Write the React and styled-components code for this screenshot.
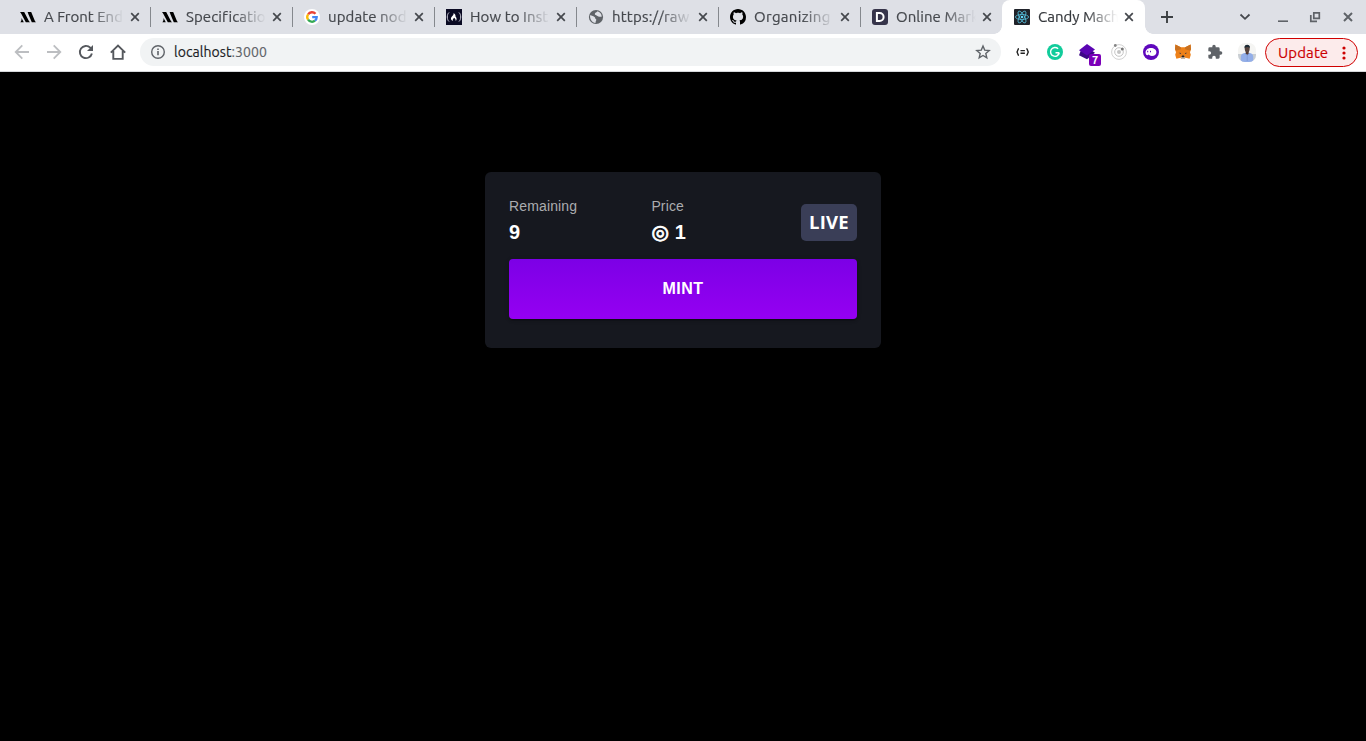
import React from "react";
import styled, { createGlobalStyle, css } from "styled-components";

const GlobalStyle = createGlobalStyle`
  * { box-sizing: border-box; }
  html, body { margin: 0; height: 100%; background: #000; overflow: hidden; }
  body { font-family: "Liberation Sans", Arial, sans-serif; }
  svg { display: block; flex: none; overflow: visible; }
`;

const ui = css`
  font-family: Ubuntu, "Noto Sans", sans-serif;
`;

const Window = styled.div`
  width: 1366px;
  height: 741px;
  display: flex;
  flex-direction: column;
  background: #000;
`;

const TabStrip = styled.div`
  height: 34px;
  flex: none;
  display: flex;
  padding-left: 8px;
  background: #dee0e6;
`;

const Tab = styled.div`
  ${ui}
  position: relative;
  width: ${(p) => (p.$active ? 143 : 142)}px;
  height: 34px;
  display: flex;
  align-items: center;
  padding-left: 12px;
  color: ${(p) => (p.$active ? "#35383c" : "#45484d")};
  background: ${(p) => (p.$active ? "#fff" : "transparent")};
  border-radius: 8px 8px 0 0;
  ${(p) =>
    p.$active &&
    css`
      &::before,
      &::after {
        content: "";
        position: absolute;
        bottom: 0;
        width: 8px;
        height: 8px;
      }
      &::before {
        left: -8px;
        background: radial-gradient(circle at 0 0, transparent 7.5px, #fff 8px);
      }
      &::after {
        right: -8px;
        background: radial-gradient(circle at 100% 0, transparent 7.5px, #fff 8px);
      }
    `}
`;

const Divider = styled.span`
  position: absolute;
  right: -1px;
  top: 7px;
  width: 1px;
  height: 20px;
  background: #85888d;
`;

const TabTitle = styled.span`
  width: 80px;
  margin: 0 6px 0 8px;
  white-space: nowrap;
  font-size: 15px;
  line-height: 20px;
  letter-spacing: ${(p) => p.$spacing || 0}px;
  -webkit-text-stroke: 0.2px currentColor;
  mask-image: linear-gradient(90deg, #000 60%, transparent 100%);
`;

const NewTab = styled.div`
  width: 44px;
  display: flex;
  align-items: center;
  justify-content: center;
`;

const WindowControls = styled.div`
  margin-left: auto;
  display: flex;
  align-items: center;
  padding-right: 1px;
`;

const Control = styled.span`
  width: ${(p) => p.$width}px;
  display: flex;
  justify-content: center;
`;

const Toolbar = styled.div`
  height: 38px;
  flex: none;
  display: flex;
  padding: 4px 8px 0 6px;
  background: #fff;
  border-bottom: 1px solid #d5d7da;
`;

const NavButton = styled.span`
  width: 32px;
  height: 28px;
  display: flex;
  align-items: center;
  justify-content: center;
`;

const AddressBar = styled.div`
  ${ui}
  width: 861px;
  height: 28px;
  margin-left: 6px;
  padding: 0 10px;
  display: flex;
  align-items: center;
  border-radius: 14px;
  background: #f1f3f4;
  font-size: 14px;
  color: #202124;
`;

const Url = styled.span`
  margin-left: 8px;
  flex: 1;
  line-height: 20px;
  letter-spacing: 0.07px;
  -webkit-text-stroke: 0.15px currentColor;
  span { color: #5f6368; }
`;

const Extensions = styled.div`
  display: flex;
  margin-left: 6px;
  width: 258px;
`;

const Extension = styled.span`
  position: relative;
  width: 32px;
  height: 28px;
  display: flex;
  align-items: center;
  justify-content: center;
`;

const Badge = styled.span`
  ${ui}
  position: absolute;
  left: 18px;
  top: 16px;
  width: 12px;
  height: 12px;
  border-radius: 2px;
  background: #7b00b8;
  color: #fff;
  font-size: 11px;
  font-weight: 700;
  line-height: 12px;
  text-align: center;
`;

const UpdateButton = styled.div`
  ${ui}
  width: 93px;
  height: 29px;
  display: flex;
  align-items: center;
  justify-content: space-between;
  padding: 0 11px 0 12px;
  border: 1px solid #d00000;
  border-radius: 15px;
  background: #fcebeb;
  color: #cc0000;
  font-size: 15px;
  line-height: 20px;
  letter-spacing: 0.1px;
  -webkit-text-stroke: 0.15px currentColor;
`;

const Page = styled.main`
  flex: 1;
  display: flex;
  justify-content: center;
  align-items: flex-start;
  padding-top: 100px;
  background: #000;
`;

const Card = styled.section`
  width: 396px;
  height: 176px;
  padding: 24px;
  border-radius: 6px;
  background: #16181f;
`;

const Stats = styled.div`
  display: flex;
  height: 52px;
  margin-bottom: 11px;
`;

const Stat = styled.div`
  width: ${(p) => p.$width}px;
`;

const Label = styled.div`
  font-size: 14px;
  line-height: 20px;
  letter-spacing: 0.14px;
  color: #abacaf;
`;

const Value = styled.div`
  font-size: 20px;
  font-weight: 700;
  line-height: 32px;
  letter-spacing: 0.15px;
  color: #fff;
  font-family: "Liberation Sans", "DejaVu Sans", sans-serif;
`;

const Currency = styled.span`
  -webkit-text-stroke: 0.9px #fff;
`;

const Live = styled.div`
  width: 56px;
  height: 37px;
  margin: 8px 0 0 auto;
  border-radius: 5px;
  background: #3a3e57;
  color: #fff;
  font-family: "Open Sans", "Noto Sans", sans-serif;
  font-size: 18.5px;
  font-weight: 700;
  line-height: 35px;
  letter-spacing: 0.2px;
  text-align: center;
`;

const MintButton = styled.button`
  display: block;
  width: 348px;
  height: 60px;
  padding: 0;
  border: 0;
  border-radius: 4px;
  background: linear-gradient(180deg, #7c00e6 0%, #9500f2 100%);
  box-shadow: 0 3px 1px -2px rgba(0, 0, 0, 0.2), 0 2px 2px rgba(0, 0, 0, 0.14),
    0 1px 5px rgba(0, 0, 0, 0.12);
  color: #fff;
  font: 700 16px/28px "Liberation Sans", Arial, sans-serif;
  letter-spacing: 0.457px;
`;

const Svg = ({ size = 16, box, children, ...rest }) => (
  <svg width={size} height={size} viewBox={`0 0 ${box || size} ${box || size}`} fill="none" {...rest}>
    {children}
  </svg>
);

const CloseIcon = () => (
  <Svg size={10} stroke="#45484d" strokeWidth="1.7">
    <path d="M1.2 1.2 8.8 8.8M8.8 1.2 1.2 8.8" />
  </Svg>
);

const ModernIcon = () => (
  <Svg fill="#000">
    <path d="M0 3h4.2l4.3 8.2c.5 1 1 1.6 1.6 2H5.800L1.400 5C1 4.200.600 3.500 0 3Z" />
    <path d="M7.500 3h3.700l3.500 8.400c.3.800.8 1.300 1.300 1.800h-4.200L8.300 5c-.2-.9-.4-1.500-.8-2Z" />
    <path d="M.3 13.200c1-.8 1.400-2 1.200-4.200l2.300 4.200Z" />
  </Svg>
);

const GoogleIcon = () => (
  <Svg>
    <circle cx="8" cy="8" r="8" fill="#fff" />
    <g strokeWidth="2.300">
      <path d="M4.100 5.300A4.700 4.700 0 0 1 11.500 4.800" stroke="#ea4335" />
      <path d="M4.100 5.300a4.700 4.700 0 0 0 0 5.400" stroke="#fbbc05" />
      <path d="M4.100 10.700a4.700 4.700 0 0 0 6.900 1" stroke="#34a853" />
      <path d="M11 11.700A4.700 4.700 0 0 0 12.700 8.200H8.200" stroke="#4285f4" />
    </g>
  </Svg>
);

const CampIcon = () => (
  <Svg>
    <rect width="16" height="16" fill="#0a0a23" />
    <path d="M3 3.500C.700 5.500.700 10.500 3 12.500M13 3.500c2.300 2 2.300 7 0 9" stroke="#d0d0dc" strokeWidth="1" />
    <path d="M7.500 4c1.500.8 2.200 2 2 3.400 1.200 1.100 1.700 3.300.2 4.700.2-1.500-.5-2.400-1.500-3.300-1.100.8-1.800 1.900-1.300 3.200-2.300-1-2.600-3.200-.5-5 .9-1 1.500-1.800 1.100-3Z" fill="#fff" />
  </Svg>
);

const GlobeIcon = () => (
  <Svg>
    <circle cx="8" cy="8" r="7.100" fill="#5f6368" />
    <path d="M2 6.200c2 .2 3.700.8 4.800 2 .7.800.2 1.700 1.400 2.100.3 1.300-.7 2-.7 3.600C4 13.600 1.900 10.500 2 6.200ZM9.600 2.300C8.800 3.800 7 3.500 6.800 5c-.1 1.300 1.700 1 2.600 2 1 1.200 2.500.6 4.300.7.100-2.200-1.300-4.500-4.100-5.400Z" fill="#dee0e6" />
  </Svg>
);

const GithubIcon = () => (
  <Svg>
    <path fill="#000" d="M8 0C3.580 0 0 3.580 0 8c0 3.540 2.290 6.530 5.470 7.590.4.070.55-.17.55-.38 0-.19-.01-.82-.01-1.490-2.010.37-2.530-.49-2.690-.94-.09-.23-.48-.94-.82-1.130-.28-.15-.68-.52-.01-.53.63-.01 1.080.58 1.230.82.72 1.210 1.870.87 2.330.66.070-.52.28-.87.51-1.070-1.780-.2-3.640-.89-3.640-3.950 0-.87.31-1.590.82-2.150-.08-.2-.36-1.020.08-2.120 0 0 .67-.21 2.200.82.64-.18 1.320-.27 2-.27s1.360.09 2 .27c1.530-1.040 2.200-.82 2.200-.82.44 1.100.16 1.920.08 2.120.51.56.82 1.270.82 2.150 0 3.070-1.870 3.750-3.650 3.950.29.25.54.73.54 1.480 0 1.070-.01 1.930-.01 2.200 0 .21.15.46.55.38A8.010 8.010 0 0 0 16 8c0-4.420-3.580-8-8-8Z" />
  </Svg>
);

const DribbleIcon = () => (
  <Svg>
    <rect width="16" height="16" rx="3" fill="#36344a" />
    <path d="M4.900 4h2.700a4 4 0 0 1 0 8H4.900Z" stroke="#fff" strokeWidth="2" />
  </Svg>
);

const ReactIcon = () => (
  <Svg>
    <rect width="16" height="16" rx="1" fill="#20232a" />
    <g stroke="#55bfdc" strokeWidth=".8">
      <ellipse cx="8" cy="8" rx="6.600" ry="2.500" />
      <ellipse cx="8" cy="8" rx="6.600" ry="2.500" transform="rotate(60 8 8)" />
      <ellipse cx="8" cy="8" rx="6.600" ry="2.500" transform="rotate(120 8 8)" />
    </g>
    <circle cx="8" cy="8" r="1.300" fill="#61dafb" />
  </Svg>
);

const BackIcon = ({ flip }) => (
  <Svg stroke="#bcbec1" strokeWidth="1.800" transform={flip ? "scale(-1 1)" : undefined}>
    <path d="M15 8H2M8.300 1.400 1.700 8l6.600 6.600" />
  </Svg>
);

const ReloadIcon = () => (
  <Svg>
    <path d="M13.900 9.500A6.100 6.100 0 1 1 12.300 3.700l1.200 1.200" stroke="#55585d" strokeWidth="1.900" />
    <path d="M15 1v6H9Z" fill="#55585d" />
  </Svg>
);

const HomeIcon = () => (
  <Svg>
    <path d="M.8 8.600 8 1.500l7.200 7.100M3.300 7v7.900h9.400V7" stroke="#55585d" strokeWidth="1.900" />
  </Svg>
);

const InfoIcon = () => (
  <Svg>
    <circle cx="8" cy="8" r="6.300" stroke="#5f6368" strokeWidth="1.400" />
    <path d="M8 7v4.300M8 4.400v1.500" stroke="#5f6368" strokeWidth="1.600" />
  </Svg>
);

const StarIcon = () => (
  <Svg>
    <path d="m8 2 1.700 4.100 4.500.4-3.400 2.900 1 4.400L8 11.500l-3.800 2.300 1-4.400-3.400-2.900 4.500-.4Z" stroke="#5f6368" strokeWidth="1.400" />
  </Svg>
);

const BracesIcon = () => (
  <Svg stroke="#222" strokeWidth="1.400">
    <path d="M4 4.700c-2 0-.6 3.200-2.500 3.300C3.400 8.100 2 11.300 4 11.300M11.300 4.700c2 0 .6 3.200 2.500 3.300-1.900.1-.5 3.300-2.500 3.300M5.500 6.600h4.400M5.500 9.200h4.400" />
  </Svg>
);

const GrammarIcon = () => (
  <Svg>
    <circle cx="8" cy="8" r="8" fill="#11cc9b" />
    <path d="M11.100 4.800A4.400 4.400 0 1 0 12.300 8.800M8.500 8.800h3.900M10.700 10.900l1.700-2" stroke="#fff" strokeWidth="1.400" />
  </Svg>
);

const LayersIcon = () => (
  <Svg>
    <path d="m8 3.600 8 5.200-8 6.400-8-4 1.500-4Z" fill="#3d0886" />
    <path d="m8 0 8 5.600-8 5.800-8-5.200Z" fill="#5b05b3" />
  </Svg>
);

const OrbitIcon = () => (
  <Svg>
    <circle cx="8" cy="8" r="7.400" stroke="#d2d2d2" />
    <circle cx="8" cy="8" r="4.300" stroke="#c5c5c5" />
    <circle cx="8" cy="8" r="2" fill="#c4c4c4" />
    <circle cx="4.300" cy="1.500" r="1.400" fill="#858585" />
    <circle cx="11.300" cy="5.100" r="1.500" fill="#777" />
  </Svg>
);

const GhostIcon = () => (
  <Svg>
    <circle cx="8" cy="8" r="8" fill="#5f08bd" />
    <path d="M2.600 9C2.300 6 4.500 3.900 7.800 3.900c3.300 0 5.600 1.700 5.600 4.300 0 2.400-1.800 3.800-4.500 3.800-1.500 0-2.600-.5-3.300-1.400C4.600 11.600 2.800 11.400 2.600 9Z" fill="#fff" />
    <path d="M4.700 6.800v1.500M7.500 6.800v1.500" stroke="#5f08bd" strokeWidth="1" />
  </Svg>
);

const FoxIcon = () => (
  <Svg>
    <path d="m.4.400 5.400 2.800h4.400L15.600.4 16 5.200l-1 3 .8 2.600-1.200 4-4-1-1.300 1.300H6.700l-1.300-1.300-4 1-1.200-4L1 8.200l-1-3Z" fill="#ee8118" />
    <path d="m.4.400 5.400 2.800L6 5.300 1 6.700l-1-1.500ZM15.600.4l-5.400 2.800L10 5.300l5 1.400 1-1.500Z" fill="#c9701f" />
    <path d="m3.800 8.800 2.300.1-.5 1.100Zm8.400 0-2.300.1.500 1.100Z" fill="#263247" />
    <path d="m5.400 13.800 1.300-1h2.600l1.300 1-1.300 1.300H6.700Z" fill="#c4b8aa" />
    <path d="m6.800 12.300.4-.8h1.600l.4.800v1H6.800Z" fill="#222" />
  </Svg>
);

const PuzzleIcon = () => (
  <Svg box={24}>
    <path fill="#5f6368" d="M20.500 11H19V7a2 2 0 0 0-2-2h-4V3.500a2.500 2.500 0 0 0-5 0V5H4a2 2 0 0 0-2 2v3.800h1.500a2.700 2.700 0 0 1 0 5.400H2V20a2 2 0 0 0 2 2h3.800v-1.500a2.700 2.700 0 0 1 5.400 0V22H17a2 2 0 0 0 2-2v-4h1.500a2.500 2.500 0 0 0 0-5Z" />
  </Svg>
);

const AvatarIcon = () => (
  <Svg size={18}>
    <clipPath id="avatar"><rect y="0" width="18" height="19" rx="7" /></clipPath>
    <g clipPath="url(#avatar)">
      <rect width="18" height="19" fill="#f5f5f3" />
      <path d="M0 11h18v8H0Z" fill="#c9ced3" />
      <path d="M2.800 19v-5.200Q3 10.800 6.500 10h5.500q3 .8 3.200 3.800V19Z" fill="#93aee8" />
      <path d="M7.700 7h3v3.500L9.200 12 7.700 10.500Z" fill="#54382f" />
      <ellipse cx="9.200" cy="5.600" rx="2.500" ry="3.700" fill="#56433e" />
      <path d="M6.500 5C5.700.8 12.600.8 11.900 5Q9.500 3.200 6.500 5Z" fill="#1b2a35" />
      <path d="m7 10.300 2.200 2 2.200-2M9.200 12.500V18" stroke="#7390cd" strokeWidth=".6" />
    </g>
  </Svg>
);

const tabs = [
  { title: "A Front End", icon: <ModernIcon /> },
  { title: "Specificatio", icon: <ModernIcon />, spacing: 0.1 },
  { title: "update nod", icon: <GoogleIcon />, spacing: 0.1 },
  { title: "How to Inst", icon: <CampIcon />, spacing: 0.1 },
  { title: "https://raw", icon: <GlobeIcon />, spacing: 0.2 },
  { title: "Organizing", icon: <GithubIcon />, spacing: 0.3 },
  { title: "Online Mark", icon: <DribbleIcon />, spacing: 0.05 },
  { title: "Candy Mach", icon: <ReactIcon />, active: true },
];

const extensions = [BracesIcon, GrammarIcon, LayersIcon, OrbitIcon, GhostIcon, FoxIcon, PuzzleIcon, AvatarIcon];

export default function App() {
  return (
    <Window>
      <GlobalStyle />
      <TabStrip>
        {tabs.map((tab, i) => (
          <Tab key={tab.title} $active={tab.active}>
            {tab.icon}
            <TabTitle $spacing={tab.spacing}>{tab.title}</TabTitle>
            <CloseIcon />
            {i < 6 && <Divider />}
          </Tab>
        ))}
        <NewTab>
          <Svg size={12} stroke="#3c4043" strokeWidth="1.900"><path d="M6 0v12M0 6h12" /></Svg>
        </NewTab>
        <WindowControls>
          <Control $width={44}>
            <Svg size={10} stroke="#45484d" strokeWidth="1.800"><path d="m.5 2.500 4.500 4.300 4.500-4.300" /></Svg>
          </Control>
          <Control $width={32}>
            <Svg size={10} stroke="#5f6368" strokeWidth="1.600"><path d="M0 9.200h10" /></Svg>
          </Control>
          <Control $width={32}>
            <Svg size={10} stroke="#5f6368" strokeWidth="1.700"><path d="M3.800.8h5.500v5.500H3.800ZM.8 3v6.300H7" /></Svg>
          </Control>
          <Control $width={34}>
            <Svg size={10} stroke="#5f6368" strokeWidth="2"><path d="m1 1 8 8M9 1 1 9" /></Svg>
          </Control>
        </WindowControls>
      </TabStrip>
      <Toolbar>
        <NavButton><BackIcon /></NavButton>
        <NavButton><BackIcon flip /></NavButton>
        <NavButton><ReloadIcon /></NavButton>
        <NavButton><HomeIcon /></NavButton>
        <AddressBar>
          <InfoIcon />
          <Url>localhost<span>:3000</span></Url>
          <StarIcon />
        </AddressBar>
        <Extensions>
          {extensions.map((Icon, i) => (
            <Extension key={i}>
              <Icon />
              {i === 2 && <Badge>7</Badge>}
            </Extension>
          ))}
        </Extensions>
        <UpdateButton>
          Update
          <svg width="4" height="14" viewBox="0 0 4 14" fill="#cc0000">
            <circle cx="2" cy="2" r="1.600" /><circle cx="2" cy="7" r="1.600" /><circle cx="2" cy="12" r="1.600" />
          </svg>
        </UpdateButton>
      </Toolbar>
      <Page>
        <Card>
          <Stats>
            <Stat $width={142.4}>
              <Label>Remaining</Label>
              <Value>9</Value>
            </Stat>
            <Stat $width={100}>
              <Label>Price</Label>
              <Value><Currency>◎</Currency> 1</Value>
            </Stat>
            <Live>LIVE</Live>
          </Stats>
          <MintButton>MINT</MintButton>
        </Card>
      </Page>
    </Window>
  );
}
